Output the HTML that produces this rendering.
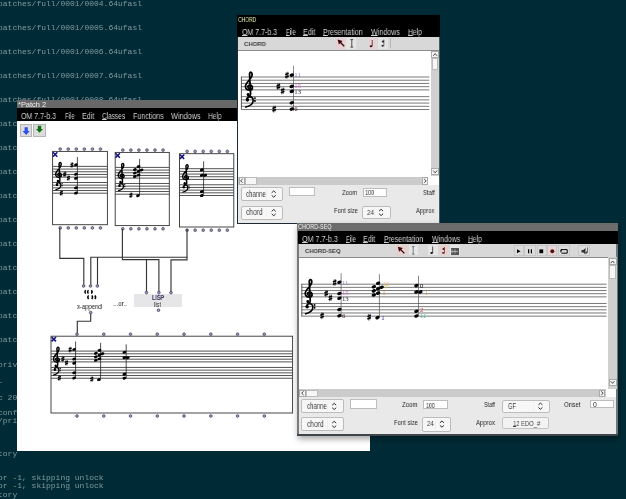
<!DOCTYPE html>
<html><head><meta charset="utf-8">
<style>
*{margin:0;padding:0;box-sizing:border-box}
html,body{width:626px;height:499px;overflow:hidden;background:#002b36;position:relative;font-family:"Liberation Sans",sans-serif}
.a{position:absolute}
.t{position:absolute;white-space:pre;line-height:1;will-change:transform}
u{text-decoration-thickness:0.7px;text-underline-offset:0.3px}
.term{position:absolute;left:0;font-family:"Liberation Mono",monospace;font-size:8px;line-height:8px;color:#7f9a9c;white-space:pre;transform:scaleY(1.0);transform-origin:0 50%;will-change:transform}
</style></head><body>

<div class="term" style="top:-0.20px;left:-2.1px">patches/full/0001/0004.64ufasl</div>
<div class="term" style="top:23.83px;left:-2.1px">patches/full/0001/0005.64ufasl</div>
<div class="term" style="top:47.87px;left:-2.1px">patches/full/0001/0006.64ufasl</div>
<div class="term" style="top:71.90px;left:-2.1px">patches/full/0001/0007.64ufasl</div>
<div class="term" style="top:95.94px;left:-2.1px">patches/full/0001/0008.64ufasl</div>
<div class="term" style="top:119.97px;left:-2.1px">patches/full/0001/0009.64ufasl</div>
<div class="term" style="top:144.01px;left:-2.1px">patches/full/0001/0009.64ufasl</div>
<div class="term" style="top:168.04px;left:-2.1px">patches/full/0001/0009.64ufasl</div>
<div class="term" style="top:192.07px;left:-2.1px">patches/full/0001/0009.64ufasl</div>
<div class="term" style="top:216.11px;left:-2.1px">patches/full/0001/0009.64ufasl</div>
<div class="term" style="top:240.14px;left:-2.1px">patches/full/0001/0009.64ufasl</div>
<div class="term" style="top:264.18px;left:-2.1px">patches/full/0001/0009.64ufasl</div>
<div class="term" style="top:288.21px;left:-2.1px">patches/full/0001/0009.64ufasl</div>
<div class="term" style="top:312.25px;left:-2.1px">patches/full/0001/0009.64ufasl</div>
<div class="term" style="top:336.28px;left:-2.1px">patches/full/0001/0009.64ufasl</div>
<div class="term" style="top:361.32px;left:-2.1px">private</div>
<div class="term" style="top:378.34px;left:-2.1px">-</div>
<div class="term" style="top:394.36px;left:-2.1px">c 2019</div>
<div class="term" style="top:409.38px;left:-2.1px">config</div>
<div class="term" style="top:417.40px;left:-2.1px">/private</div>
<div class="term" style="top:450.44px;left:-2.1px">tory</div>
<div class="term" style="top:474.48px;left:-2.1px">or -1, skipping unlock</div>
<div class="term" style="top:482.49px;left:-2.1px">or -1, skipping unlock</div>
<div class="term" style="top:490.50px;left:-2.1px">tory</div>
<div class="a" style="left:16.5px;top:100px;width:353.5px;height:351px;background:#ffffff;"></div>
<div class="a" style="left:17px;top:100px;width:353px;height:8px;background:#686868;"></div>
<div class="t" style="left:18.40px;top:102.00px;font-size:6.8px;color:#f0f0f0;font-weight:normal;font-family:'Liberation Sans',sans-serif;transform:scaleX(1.097);transform-origin:0 0;">*Patch 2</div>
<div class="a" style="left:17px;top:108px;width:353px;height:13px;background:#000;"></div>
<div class="t" style="left:20.90px;top:112.00px;font-size:8.8px;color:#cfcfcf;font-weight:normal;font-family:'Liberation Sans',sans-serif;transform:scaleX(0.800);transform-origin:0 0;">OM 7.7-b.3</div>
<div class="t" style="left:64.80px;top:112.00px;font-size:8.8px;color:#cfcfcf;font-weight:normal;font-family:'Liberation Sans',sans-serif;transform:scaleX(0.678);transform-origin:0 0;">File</div>
<div class="t" style="left:82.00px;top:112.00px;font-size:8.8px;color:#cfcfcf;font-weight:normal;font-family:'Liberation Sans',sans-serif;transform:scaleX(0.817);transform-origin:0 0;">Edit</div>
<div class="t" style="left:102.00px;top:112.00px;font-size:8.8px;color:#cfcfcf;font-weight:normal;font-family:'Liberation Sans',sans-serif;transform:scaleX(0.735);transform-origin:0 0;"><u>C</u>lasses</div>
<div class="t" style="left:132.70px;top:112.00px;font-size:8.8px;color:#cfcfcf;font-weight:normal;font-family:'Liberation Sans',sans-serif;transform:scaleX(0.805);transform-origin:0 0;">Functions</div>
<div class="t" style="left:171.00px;top:112.00px;font-size:8.8px;color:#cfcfcf;font-weight:normal;font-family:'Liberation Sans',sans-serif;transform:scaleX(0.830);transform-origin:0 0;">Windows</div>
<div class="t" style="left:208.00px;top:112.00px;font-size:8.8px;color:#cfcfcf;font-weight:normal;font-family:'Liberation Sans',sans-serif;transform:scaleX(0.747);transform-origin:0 0;">Help</div>
<div class="a" style="left:20px;top:124px;width:11.5px;height:12.5px;background:#dcdcdc;border:0.8px solid #b4b4b4;"></div>
<div class="a" style="left:33px;top:124px;width:13px;height:12.5px;background:#dcdcdc;border:0.8px solid #b4b4b4;"></div>
<div class="t" style="left:77.00px;top:303.00px;font-size:7.2px;color:#111;font-weight:normal;font-family:'Liberation Sans',sans-serif;transform:scaleX(0.819);transform-origin:0 0;">x-append</div>
<div class="t" style="left:113.00px;top:300.00px;font-size:7.6px;color:#222;font-weight:normal;font-family:'Liberation Sans',sans-serif;transform:scaleX(0.828);transform-origin:0 0;">...or..</div>
<div class="a" style="left:134px;top:294.3px;width:48.30000000000001px;height:12.899999999999977px;background:#e6e6e8;"></div>
<div class="t" style="left:152.30px;top:295.00px;font-size:6.4px;color:#2c2c58;font-weight:bold;font-family:'Liberation Sans',sans-serif;transform:scaleX(0.850);transform-origin:0 0;">LISP</div>
<div class="t" style="left:154.10px;top:302.00px;font-size:6.8px;color:#2a2a2a;font-weight:normal;font-family:'Liberation Sans',sans-serif;transform:scaleX(0.832);transform-origin:0 0;">list</div>
<svg class="a" style="left:0;top:0" width="626" height="499" viewBox="0 0 626 499"><path d="M24.6,127.3 H27.8 V131 H29.7 L26.2,135 L22.6,131 H24.6 Z" fill="#2d4ee8"/><path d="M37.8,125.8 H41.2 V129 H43 L39.5,132.8 L36,129 H37.8 Z" fill="#0e6e10"/><rect x="52.6" y="151.4" width="54.800000000000004" height="73.29999999999998" fill="#fff" stroke="#333" stroke-width="0.9"/><line x1="52.6" y1="166.40" x2="107.4" y2="166.40" stroke="#4a4a4a" stroke-width="0.95"/><line x1="52.6" y1="169.08" x2="107.4" y2="169.08" stroke="#4a4a4a" stroke-width="0.95"/><line x1="52.6" y1="171.76" x2="107.4" y2="171.76" stroke="#4a4a4a" stroke-width="0.95"/><line x1="52.6" y1="174.44" x2="107.4" y2="174.44" stroke="#4a4a4a" stroke-width="0.95"/><line x1="52.6" y1="177.12" x2="107.4" y2="177.12" stroke="#4a4a4a" stroke-width="0.95"/><line x1="52.6" y1="182.48" x2="107.4" y2="182.48" stroke="#4a4a4a" stroke-width="0.95"/><line x1="52.6" y1="185.16" x2="107.4" y2="185.16" stroke="#4a4a4a" stroke-width="0.95"/><line x1="52.6" y1="187.84" x2="107.4" y2="187.84" stroke="#4a4a4a" stroke-width="0.95"/><line x1="52.6" y1="190.52" x2="107.4" y2="190.52" stroke="#4a4a4a" stroke-width="0.95"/><line x1="52.6" y1="193.20" x2="107.4" y2="193.20" stroke="#4a4a4a" stroke-width="0.95"/><g transform="translate(54.800000000000004,166.4) scale(2.68)"><path d="M1.7,3.5 C1.0,3.6 0.8,2.7 1.6,2.5 C2.6,2.4 2.9,3.9 1.7,4.1 C0.4,4.2 0.0,3.0 0.6,2.1 C1.2,1.1 2.4,0.3 2.4,-0.8 C2.4,-1.6 1.8,-1.7 1.6,-1.0 L1.9,5.2 C2.0,5.9 1.3,6.0 1.0,5.6" fill="none" stroke="#000" stroke-width="0.55"/><circle cx="1.15" cy="5.45" r="0.45" fill="#000"/></g><g transform="translate(55.2,182.48000000000002) scale(2.1976)"><path d="M0.6,1.0 C0.6,-0.1 2.6,-0.2 2.6,1.3 C2.6,2.5 1.4,3.1 0.1,3.4" fill="none" stroke="#000" stroke-width="0.55"/><circle cx="0.8" cy="1.1" r="0.55" fill="#000"/><circle cx="3.15" cy="0.55" r="0.3" fill="#000"/><circle cx="3.15" cy="1.45" r="0.3" fill="#000"/></g><line x1="77.4" y1="157" x2="77.4" y2="193" stroke="#222" stroke-width="0.8"/><ellipse cx="75.95" cy="164.79" rx="1.93" ry="1.39" transform="rotate(-20 75.95 164.79)" fill="#000"/><ellipse cx="75.95" cy="174.23" rx="1.93" ry="1.39" transform="rotate(-20 75.95 174.23)" fill="#000"/><ellipse cx="75.95" cy="178.33" rx="1.93" ry="1.39" transform="rotate(-20 75.95 178.33)" fill="#000"/><ellipse cx="75.95" cy="187.84" rx="1.93" ry="1.39" transform="rotate(-20 75.95 187.84)" fill="#000"/><ellipse cx="75.95" cy="193.07" rx="1.93" ry="1.39" transform="rotate(-20 75.95 193.07)" fill="#000"/><g stroke="#000"><line x1="71.37" y1="162.25" x2="71.37" y2="167.87" stroke-width="0.43"/><line x1="72.55" y1="161.98" x2="72.55" y2="167.61" stroke-width="0.43"/><line x1="70.49" y1="164.52" x2="73.43" y2="163.32" stroke-width="1.34"/><line x1="70.49" y1="166.53" x2="73.43" y2="165.33" stroke-width="1.34"/></g><g stroke="#000"><line x1="64.21" y1="171.55" x2="64.21" y2="177.17" stroke-width="0.43"/><line x1="65.39" y1="171.28" x2="65.39" y2="176.91" stroke-width="0.43"/><line x1="63.33" y1="173.82" x2="66.28" y2="172.62" stroke-width="1.34"/><line x1="63.33" y1="175.83" x2="66.28" y2="174.63" stroke-width="1.34"/></g><g stroke="#000"><line x1="67.78" y1="175.24" x2="67.78" y2="180.87" stroke-width="0.43"/><line x1="68.96" y1="174.98" x2="68.96" y2="180.60" stroke-width="0.43"/><line x1="66.89" y1="177.52" x2="69.84" y2="176.32" stroke-width="1.34"/><line x1="66.89" y1="179.53" x2="69.84" y2="178.33" stroke-width="1.34"/></g><g stroke="#000"><line x1="60.73" y1="190.39" x2="60.73" y2="196.01" stroke-width="0.43"/><line x1="61.91" y1="190.12" x2="61.91" y2="195.75" stroke-width="0.43"/><line x1="59.85" y1="192.66" x2="62.79" y2="191.46" stroke-width="1.34"/><line x1="59.85" y1="194.67" x2="62.79" y2="193.47" stroke-width="1.34"/></g><g stroke="#14147a" stroke-width="1.6"><line x1="52.9" y1="152.3" x2="57.3" y2="156.70000000000002"/><line x1="57.3" y1="152.3" x2="52.9" y2="156.70000000000002"/></g><circle cx="60.2" cy="149.1" r="1.35" fill="#9a9ab8" stroke="#4a4a6a" stroke-width="0.8"/><circle cx="60.2" cy="227.89999999999998" r="1.35" fill="#9a9ab8" stroke="#4a4a6a" stroke-width="0.8"/><circle cx="68.25" cy="149.1" r="1.35" fill="#9a9ab8" stroke="#4a4a6a" stroke-width="0.8"/><circle cx="68.25" cy="227.89999999999998" r="1.35" fill="#9a9ab8" stroke="#4a4a6a" stroke-width="0.8"/><circle cx="76.30000000000001" cy="149.1" r="1.35" fill="#9a9ab8" stroke="#4a4a6a" stroke-width="0.8"/><circle cx="76.30000000000001" cy="227.89999999999998" r="1.35" fill="#9a9ab8" stroke="#4a4a6a" stroke-width="0.8"/><circle cx="84.35000000000001" cy="149.1" r="1.35" fill="#9a9ab8" stroke="#4a4a6a" stroke-width="0.8"/><circle cx="84.35000000000001" cy="227.89999999999998" r="1.35" fill="#9a9ab8" stroke="#4a4a6a" stroke-width="0.8"/><circle cx="92.4" cy="149.1" r="1.35" fill="#9a9ab8" stroke="#4a4a6a" stroke-width="0.8"/><circle cx="92.4" cy="227.89999999999998" r="1.35" fill="#9a9ab8" stroke="#4a4a6a" stroke-width="0.8"/><circle cx="100.45" cy="149.1" r="1.35" fill="#9a9ab8" stroke="#4a4a6a" stroke-width="0.8"/><circle cx="100.45" cy="227.89999999999998" r="1.35" fill="#9a9ab8" stroke="#4a4a6a" stroke-width="0.8"/><rect x="115.2" y="152.4" width="54.10000000000001" height="73.19999999999999" fill="#fff" stroke="#333" stroke-width="0.9"/><line x1="115.2" y1="167.40" x2="169.3" y2="167.40" stroke="#4a4a4a" stroke-width="0.95"/><line x1="115.2" y1="170.08" x2="169.3" y2="170.08" stroke="#4a4a4a" stroke-width="0.95"/><line x1="115.2" y1="172.76" x2="169.3" y2="172.76" stroke="#4a4a4a" stroke-width="0.95"/><line x1="115.2" y1="175.44" x2="169.3" y2="175.44" stroke="#4a4a4a" stroke-width="0.95"/><line x1="115.2" y1="178.12" x2="169.3" y2="178.12" stroke="#4a4a4a" stroke-width="0.95"/><line x1="115.2" y1="183.48" x2="169.3" y2="183.48" stroke="#4a4a4a" stroke-width="0.95"/><line x1="115.2" y1="186.16" x2="169.3" y2="186.16" stroke="#4a4a4a" stroke-width="0.95"/><line x1="115.2" y1="188.84" x2="169.3" y2="188.84" stroke="#4a4a4a" stroke-width="0.95"/><line x1="115.2" y1="191.52" x2="169.3" y2="191.52" stroke="#4a4a4a" stroke-width="0.95"/><line x1="115.2" y1="194.20" x2="169.3" y2="194.20" stroke="#4a4a4a" stroke-width="0.95"/><g transform="translate(117.4,167.4) scale(2.68)"><path d="M1.7,3.5 C1.0,3.6 0.8,2.7 1.6,2.5 C2.6,2.4 2.9,3.9 1.7,4.1 C0.4,4.2 0.0,3.0 0.6,2.1 C1.2,1.1 2.4,0.3 2.4,-0.8 C2.4,-1.6 1.8,-1.7 1.6,-1.0 L1.9,5.2 C2.0,5.9 1.3,6.0 1.0,5.6" fill="none" stroke="#000" stroke-width="0.55"/><circle cx="1.15" cy="5.45" r="0.45" fill="#000"/></g><g transform="translate(117.8,183.48000000000002) scale(2.1976)"><path d="M0.6,1.0 C0.6,-0.1 2.6,-0.2 2.6,1.3 C2.6,2.5 1.4,3.1 0.1,3.4" fill="none" stroke="#000" stroke-width="0.55"/><circle cx="0.8" cy="1.1" r="0.55" fill="#000"/><circle cx="3.15" cy="0.55" r="0.3" fill="#000"/><circle cx="3.15" cy="1.45" r="0.3" fill="#000"/></g><line x1="139.6" y1="159" x2="139.6" y2="195" stroke="#222" stroke-width="0.8"/><ellipse cx="138.50" cy="166.62" rx="1.93" ry="1.39" transform="rotate(-20 138.50 166.62)" fill="#000"/><ellipse cx="141.56" cy="169.95" rx="1.93" ry="1.39" transform="rotate(-20 141.56 169.95)" fill="#000"/><ellipse cx="138.50" cy="171.26" rx="1.93" ry="1.39" transform="rotate(-20 138.50 171.26)" fill="#000"/><ellipse cx="138.50" cy="174.98" rx="1.93" ry="1.39" transform="rotate(-20 138.50 174.98)" fill="#000"/><ellipse cx="137.99" cy="195.65" rx="1.93" ry="1.39" transform="rotate(-20 137.99 195.65)" fill="#000"/><ellipse cx="134.91" cy="169.54" rx="1.93" ry="1.39" transform="rotate(-20 134.91 169.54)" fill="#000"/><ellipse cx="134.91" cy="173.03" rx="1.93" ry="1.39" transform="rotate(-20 134.91 173.03)" fill="#000"/><ellipse cx="134.91" cy="176.51" rx="1.93" ry="1.39" transform="rotate(-20 134.91 176.51)" fill="#000"/><g stroke="#000"><line x1="130.33" y1="192.54" x2="130.33" y2="198.17" stroke-width="0.43"/><line x1="131.51" y1="192.27" x2="131.51" y2="197.90" stroke-width="0.43"/><line x1="129.44" y1="194.82" x2="132.39" y2="193.61" stroke-width="1.34"/><line x1="129.44" y1="196.83" x2="132.39" y2="195.62" stroke-width="1.34"/></g><g stroke="#14147a" stroke-width="1.6"><line x1="115.5" y1="153.3" x2="119.9" y2="157.70000000000002"/><line x1="119.9" y1="153.3" x2="115.5" y2="157.70000000000002"/></g><circle cx="122.8" cy="150.1" r="1.35" fill="#9a9ab8" stroke="#4a4a6a" stroke-width="0.8"/><circle cx="122.8" cy="228.79999999999998" r="1.35" fill="#9a9ab8" stroke="#4a4a6a" stroke-width="0.8"/><circle cx="130.85" cy="150.1" r="1.35" fill="#9a9ab8" stroke="#4a4a6a" stroke-width="0.8"/><circle cx="130.85" cy="228.79999999999998" r="1.35" fill="#9a9ab8" stroke="#4a4a6a" stroke-width="0.8"/><circle cx="138.9" cy="150.1" r="1.35" fill="#9a9ab8" stroke="#4a4a6a" stroke-width="0.8"/><circle cx="138.9" cy="228.79999999999998" r="1.35" fill="#9a9ab8" stroke="#4a4a6a" stroke-width="0.8"/><circle cx="146.95" cy="150.1" r="1.35" fill="#9a9ab8" stroke="#4a4a6a" stroke-width="0.8"/><circle cx="146.95" cy="228.79999999999998" r="1.35" fill="#9a9ab8" stroke="#4a4a6a" stroke-width="0.8"/><circle cx="155.0" cy="150.1" r="1.35" fill="#9a9ab8" stroke="#4a4a6a" stroke-width="0.8"/><circle cx="155.0" cy="228.79999999999998" r="1.35" fill="#9a9ab8" stroke="#4a4a6a" stroke-width="0.8"/><circle cx="163.05" cy="150.1" r="1.35" fill="#9a9ab8" stroke="#4a4a6a" stroke-width="0.8"/><circle cx="163.05" cy="228.79999999999998" r="1.35" fill="#9a9ab8" stroke="#4a4a6a" stroke-width="0.8"/><rect x="179.5" y="153.7" width="54.30000000000001" height="73.30000000000001" fill="#fff" stroke="#333" stroke-width="0.9"/><line x1="179.5" y1="168.70" x2="233.8" y2="168.70" stroke="#4a4a4a" stroke-width="0.95"/><line x1="179.5" y1="171.38" x2="233.8" y2="171.38" stroke="#4a4a4a" stroke-width="0.95"/><line x1="179.5" y1="174.06" x2="233.8" y2="174.06" stroke="#4a4a4a" stroke-width="0.95"/><line x1="179.5" y1="176.74" x2="233.8" y2="176.74" stroke="#4a4a4a" stroke-width="0.95"/><line x1="179.5" y1="179.42" x2="233.8" y2="179.42" stroke="#4a4a4a" stroke-width="0.95"/><line x1="179.5" y1="184.78" x2="233.8" y2="184.78" stroke="#4a4a4a" stroke-width="0.95"/><line x1="179.5" y1="187.46" x2="233.8" y2="187.46" stroke="#4a4a4a" stroke-width="0.95"/><line x1="179.5" y1="190.14" x2="233.8" y2="190.14" stroke="#4a4a4a" stroke-width="0.95"/><line x1="179.5" y1="192.82" x2="233.8" y2="192.82" stroke="#4a4a4a" stroke-width="0.95"/><line x1="179.5" y1="195.50" x2="233.8" y2="195.50" stroke="#4a4a4a" stroke-width="0.95"/><g transform="translate(181.7,168.7) scale(2.68)"><path d="M1.7,3.5 C1.0,3.6 0.8,2.7 1.6,2.5 C2.6,2.4 2.9,3.9 1.7,4.1 C0.4,4.2 0.0,3.0 0.6,2.1 C1.2,1.1 2.4,0.3 2.4,-0.8 C2.4,-1.6 1.8,-1.7 1.6,-1.0 L1.9,5.2 C2.0,5.9 1.3,6.0 1.0,5.6" fill="none" stroke="#000" stroke-width="0.55"/><circle cx="1.15" cy="5.45" r="0.45" fill="#000"/></g><g transform="translate(182.1,184.78) scale(2.1976)"><path d="M0.6,1.0 C0.6,-0.1 2.6,-0.2 2.6,1.3 C2.6,2.5 1.4,3.1 0.1,3.4" fill="none" stroke="#000" stroke-width="0.55"/><circle cx="0.8" cy="1.1" r="0.55" fill="#000"/><circle cx="3.15" cy="0.55" r="0.3" fill="#000"/><circle cx="3.15" cy="1.45" r="0.3" fill="#000"/></g><line x1="203.6" y1="161.3" x2="203.6" y2="194.7" stroke="#222" stroke-width="0.8"/><ellipse cx="201.80" cy="169.88" rx="1.93" ry="1.39" transform="rotate(-20 201.80 169.88)" fill="#000"/><ellipse cx="201.80" cy="175.24" rx="1.93" ry="1.39" transform="rotate(-20 201.80 175.24)" fill="#000"/><ellipse cx="205.21" cy="175.24" rx="1.93" ry="1.39" transform="rotate(-20 205.21 175.24)" fill="#000"/><ellipse cx="201.80" cy="191.59" rx="1.93" ry="1.39" transform="rotate(-20 201.80 191.59)" fill="#000"/><ellipse cx="201.80" cy="195.58" rx="1.93" ry="1.39" transform="rotate(-20 201.80 195.58)" fill="#000"/><g stroke="#14147a" stroke-width="1.6"><line x1="179.8" y1="154.6" x2="184.20000000000002" y2="159.0"/><line x1="184.20000000000002" y1="154.6" x2="179.8" y2="159.0"/></g><circle cx="187.1" cy="151.39999999999998" r="1.35" fill="#9a9ab8" stroke="#4a4a6a" stroke-width="0.8"/><circle cx="187.1" cy="230.2" r="1.35" fill="#9a9ab8" stroke="#4a4a6a" stroke-width="0.8"/><circle cx="195.15" cy="151.39999999999998" r="1.35" fill="#9a9ab8" stroke="#4a4a6a" stroke-width="0.8"/><circle cx="195.15" cy="230.2" r="1.35" fill="#9a9ab8" stroke="#4a4a6a" stroke-width="0.8"/><circle cx="203.2" cy="151.39999999999998" r="1.35" fill="#9a9ab8" stroke="#4a4a6a" stroke-width="0.8"/><circle cx="203.2" cy="230.2" r="1.35" fill="#9a9ab8" stroke="#4a4a6a" stroke-width="0.8"/><circle cx="211.25" cy="151.39999999999998" r="1.35" fill="#9a9ab8" stroke="#4a4a6a" stroke-width="0.8"/><circle cx="211.25" cy="230.2" r="1.35" fill="#9a9ab8" stroke="#4a4a6a" stroke-width="0.8"/><circle cx="219.3" cy="151.39999999999998" r="1.35" fill="#9a9ab8" stroke="#4a4a6a" stroke-width="0.8"/><circle cx="219.3" cy="230.2" r="1.35" fill="#9a9ab8" stroke="#4a4a6a" stroke-width="0.8"/><circle cx="227.35" cy="151.39999999999998" r="1.35" fill="#9a9ab8" stroke="#4a4a6a" stroke-width="0.8"/><circle cx="227.35" cy="230.2" r="1.35" fill="#9a9ab8" stroke="#4a4a6a" stroke-width="0.8"/><path d="M59.8,228 L59.8,258.3 L83.8,258.3 L83.8,285" fill="none" stroke="#353535" stroke-width="1.15"/><path d="M187,229 L187,257.2 L90.8,257.2 L90.8,285" fill="none" stroke="#353535" stroke-width="1.15"/><path d="M97.5,257.2 L97.5,285" fill="none" stroke="#353535" stroke-width="1.15"/><path d="M187,257.2 L187,259.8 L171,259.8 L171,292" fill="none" stroke="#353535" stroke-width="1.15"/><path d="M122.4,229 L122.4,259.6 L158.9,259.6 L158.9,292" fill="none" stroke="#353535" stroke-width="1.15"/><path d="M146.5,259.6 L146.5,292" fill="none" stroke="#353535" stroke-width="1.15"/><path d="M90.7,313 L90.7,321.2 L77.3,321.2 L77.3,334" fill="none" stroke="#353535" stroke-width="1.15"/><circle cx="83.6" cy="286" r="1.35" fill="#9a9ab8" stroke="#4a4a6a" stroke-width="0.8"/><circle cx="90.5" cy="286" r="1.35" fill="#9a9ab8" stroke="#4a4a6a" stroke-width="0.8"/><circle cx="97.4" cy="286" r="1.35" fill="#9a9ab8" stroke="#4a4a6a" stroke-width="0.8"/><circle cx="90.7" cy="312.6" r="1.35" fill="#9a9ab8" stroke="#4a4a6a" stroke-width="0.8"/><g fill="none" stroke="#000" stroke-width="1.5"><path d="M85.8,290.29999999999995 Q84.10000000000001,291.9 85.8,293.5"/><path d="M88.5,290.29999999999995 Q86.8,291.9 88.5,293.5"/><path d="M91.3,290.29999999999995 Q92.89999999999999,291.9 91.3,293.5"/><path d="M88.7,295.5 Q86.9,297.2 88.7,298.9"/><path d="M91.7,295.5 Q93.39999999999999,297.2 91.7,298.9"/><path d="M94.8,295.5 Q96.5,297.2 94.8,298.9"/></g><circle cx="146.5" cy="292.6" r="1.35" fill="#9a9ab8" stroke="#4a4a6a" stroke-width="0.8"/><circle cx="158.9" cy="292.6" r="1.35" fill="#9a9ab8" stroke="#4a4a6a" stroke-width="0.8"/><circle cx="171" cy="292.6" r="1.35" fill="#9a9ab8" stroke="#4a4a6a" stroke-width="0.8"/><circle cx="158.5" cy="310.2" r="1.35" fill="#9a9ab8" stroke="#4a4a6a" stroke-width="0.8"/><rect x="51" y="336.2" width="241.6" height="76.8" fill="#fff" stroke="#333" stroke-width="0.9"/><line x1="51" y1="351.10" x2="292.6" y2="351.10" stroke="#4a4a4a" stroke-width="0.95"/><line x1="51" y1="353.80" x2="292.6" y2="353.80" stroke="#4a4a4a" stroke-width="0.95"/><line x1="51" y1="356.50" x2="292.6" y2="356.50" stroke="#4a4a4a" stroke-width="0.95"/><line x1="51" y1="359.20" x2="292.6" y2="359.20" stroke="#4a4a4a" stroke-width="0.95"/><line x1="51" y1="361.90" x2="292.6" y2="361.90" stroke="#4a4a4a" stroke-width="0.95"/><line x1="51" y1="367.44" x2="292.6" y2="367.44" stroke="#4a4a4a" stroke-width="0.95"/><line x1="51" y1="370.14" x2="292.6" y2="370.14" stroke="#4a4a4a" stroke-width="0.95"/><line x1="51" y1="372.84" x2="292.6" y2="372.84" stroke="#4a4a4a" stroke-width="0.95"/><line x1="51" y1="375.54" x2="292.6" y2="375.54" stroke="#4a4a4a" stroke-width="0.95"/><line x1="51" y1="378.24" x2="292.6" y2="378.24" stroke="#4a4a4a" stroke-width="0.95"/><g transform="translate(52.6,351.1) scale(2.7)"><path d="M1.7,3.5 C1.0,3.6 0.8,2.7 1.6,2.5 C2.6,2.4 2.9,3.9 1.7,4.1 C0.4,4.2 0.0,3.0 0.6,2.1 C1.2,1.1 2.4,0.3 2.4,-0.8 C2.4,-1.6 1.8,-1.7 1.6,-1.0 L1.9,5.2 C2.0,5.9 1.3,6.0 1.0,5.6" fill="none" stroke="#000" stroke-width="0.55"/><circle cx="1.15" cy="5.45" r="0.45" fill="#000"/></g><g transform="translate(53.0,367.3) scale(2.295)"><path d="M0.6,1.0 C0.6,-0.1 2.6,-0.2 2.6,1.3 C2.6,2.5 1.4,3.1 0.1,3.4" fill="none" stroke="#000" stroke-width="0.55"/><circle cx="0.8" cy="1.1" r="0.55" fill="#000"/><circle cx="3.15" cy="0.55" r="0.3" fill="#000"/><circle cx="3.15" cy="1.45" r="0.3" fill="#000"/></g><line x1="75.6" y1="341.5" x2="75.6" y2="377.4" stroke="#222" stroke-width="0.8"/><ellipse cx="74.14" cy="349.48" rx="1.94" ry="1.40" transform="rotate(-20 74.14 349.48)" fill="#000"/><ellipse cx="74.14" cy="358.98" rx="1.94" ry="1.40" transform="rotate(-20 74.14 358.98)" fill="#000"/><ellipse cx="74.14" cy="363.12" rx="1.94" ry="1.40" transform="rotate(-20 74.14 363.12)" fill="#000"/><ellipse cx="74.14" cy="372.70" rx="1.94" ry="1.40" transform="rotate(-20 74.14 372.70)" fill="#000"/><ellipse cx="74.14" cy="377.97" rx="1.94" ry="1.40" transform="rotate(-20 74.14 377.97)" fill="#000"/><g stroke="#000"><line x1="69.53" y1="346.92" x2="69.53" y2="352.59" stroke-width="0.43"/><line x1="70.71" y1="346.64" x2="70.71" y2="352.31" stroke-width="0.43"/><line x1="68.63" y1="349.21" x2="71.60" y2="348.00" stroke-width="1.35"/><line x1="68.63" y1="351.24" x2="71.60" y2="350.02" stroke-width="1.35"/></g><g stroke="#000"><line x1="62.32" y1="356.28" x2="62.32" y2="361.95" stroke-width="0.43"/><line x1="63.50" y1="356.01" x2="63.50" y2="361.68" stroke-width="0.43"/><line x1="61.42" y1="358.58" x2="64.39" y2="357.36" stroke-width="1.35"/><line x1="61.42" y1="360.60" x2="64.39" y2="359.39" stroke-width="1.35"/></g><g stroke="#000"><line x1="65.91" y1="360.01" x2="65.91" y2="365.68" stroke-width="0.43"/><line x1="67.09" y1="359.74" x2="67.09" y2="365.41" stroke-width="0.43"/><line x1="65.02" y1="362.31" x2="67.99" y2="361.09" stroke-width="1.35"/><line x1="65.02" y1="364.33" x2="67.99" y2="363.12" stroke-width="1.35"/></g><g stroke="#000"><line x1="58.81" y1="375.27" x2="58.81" y2="380.94" stroke-width="0.43"/><line x1="59.99" y1="375.00" x2="59.99" y2="380.67" stroke-width="0.43"/><line x1="57.91" y1="377.56" x2="60.88" y2="376.35" stroke-width="1.35"/><line x1="57.91" y1="379.59" x2="60.88" y2="378.37" stroke-width="1.35"/></g><line x1="100.6" y1="342.9" x2="100.6" y2="378.1" stroke="#222" stroke-width="0.8"/><ellipse cx="99.49" cy="350.32" rx="1.94" ry="1.40" transform="rotate(-20 99.49 350.32)" fill="#000"/><ellipse cx="102.57" cy="353.67" rx="1.94" ry="1.40" transform="rotate(-20 102.57 353.67)" fill="#000"/><ellipse cx="99.49" cy="354.99" rx="1.94" ry="1.40" transform="rotate(-20 99.49 354.99)" fill="#000"/><ellipse cx="99.49" cy="358.74" rx="1.94" ry="1.40" transform="rotate(-20 99.49 358.74)" fill="#000"/><ellipse cx="98.98" cy="379.56" rx="1.94" ry="1.40" transform="rotate(-20 98.98 379.56)" fill="#000"/><ellipse cx="95.88" cy="353.26" rx="1.94" ry="1.40" transform="rotate(-20 95.88 353.26)" fill="#000"/><ellipse cx="95.88" cy="356.77" rx="1.94" ry="1.40" transform="rotate(-20 95.88 356.77)" fill="#000"/><ellipse cx="95.88" cy="360.28" rx="1.94" ry="1.40" transform="rotate(-20 95.88 360.28)" fill="#000"/><g stroke="#000"><line x1="91.26" y1="376.43" x2="91.26" y2="382.10" stroke-width="0.43"/><line x1="92.45" y1="376.16" x2="92.45" y2="381.83" stroke-width="0.43"/><line x1="90.37" y1="378.72" x2="93.34" y2="377.51" stroke-width="1.35"/><line x1="90.37" y1="380.75" x2="93.34" y2="379.53" stroke-width="1.35"/></g><line x1="126.2" y1="344.3" x2="126.2" y2="378.1" stroke="#222" stroke-width="0.8"/><ellipse cx="124.39" cy="352.29" rx="1.94" ry="1.40" transform="rotate(-20 124.39 352.29)" fill="#000"/><ellipse cx="124.39" cy="357.69" rx="1.94" ry="1.40" transform="rotate(-20 124.39 357.69)" fill="#000"/><ellipse cx="127.82" cy="357.69" rx="1.94" ry="1.40" transform="rotate(-20 127.82 357.69)" fill="#000"/><ellipse cx="124.39" cy="374.16" rx="1.94" ry="1.40" transform="rotate(-20 124.39 374.16)" fill="#000"/><ellipse cx="124.39" cy="378.18" rx="1.94" ry="1.40" transform="rotate(-20 124.39 378.18)" fill="#000"/><g stroke="#14147a" stroke-width="1.6"><line x1="51.6" y1="337" x2="56.0" y2="341.4"/><line x1="56.0" y1="337" x2="51.6" y2="341.4"/></g><circle cx="77.0" cy="334.2" r="1.35" fill="#9a9ab8" stroke="#4a4a6a" stroke-width="0.8"/><circle cx="77.0" cy="416" r="1.35" fill="#9a9ab8" stroke="#4a4a6a" stroke-width="0.8"/><circle cx="103.76" cy="334.2" r="1.35" fill="#9a9ab8" stroke="#4a4a6a" stroke-width="0.8"/><circle cx="103.76" cy="416" r="1.35" fill="#9a9ab8" stroke="#4a4a6a" stroke-width="0.8"/><circle cx="130.52" cy="334.2" r="1.35" fill="#9a9ab8" stroke="#4a4a6a" stroke-width="0.8"/><circle cx="130.52" cy="416" r="1.35" fill="#9a9ab8" stroke="#4a4a6a" stroke-width="0.8"/><circle cx="157.28" cy="334.2" r="1.35" fill="#9a9ab8" stroke="#4a4a6a" stroke-width="0.8"/><circle cx="157.28" cy="416" r="1.35" fill="#9a9ab8" stroke="#4a4a6a" stroke-width="0.8"/><circle cx="184.04000000000002" cy="334.2" r="1.35" fill="#9a9ab8" stroke="#4a4a6a" stroke-width="0.8"/><circle cx="184.04000000000002" cy="416" r="1.35" fill="#9a9ab8" stroke="#4a4a6a" stroke-width="0.8"/><circle cx="210.8" cy="334.2" r="1.35" fill="#9a9ab8" stroke="#4a4a6a" stroke-width="0.8"/><circle cx="210.8" cy="416" r="1.35" fill="#9a9ab8" stroke="#4a4a6a" stroke-width="0.8"/><circle cx="237.56" cy="334.2" r="1.35" fill="#9a9ab8" stroke="#4a4a6a" stroke-width="0.8"/><circle cx="237.56" cy="416" r="1.35" fill="#9a9ab8" stroke="#4a4a6a" stroke-width="0.8"/><circle cx="264.32000000000005" cy="334.2" r="1.35" fill="#9a9ab8" stroke="#4a4a6a" stroke-width="0.8"/><circle cx="264.32000000000005" cy="416" r="1.35" fill="#9a9ab8" stroke="#4a4a6a" stroke-width="0.8"/></svg>
<div class="a" style="left:237px;top:15px;width:203px;height:208.8px;background:#ffffff;"></div>
<div class="a" style="left:237px;top:15px;width:1.1999999999999886px;height:208.8px;background:#1e2a36;"></div>
<div class="a" style="left:237px;top:222.5px;width:203px;height:1.3000000000000114px;background:#1e2a36;"></div>
<div class="a" style="left:438.2px;top:37px;width:1.0px;height:185.5px;background:#e8eef4;"></div>
<div class="a" style="left:439.2px;top:15px;width:1.0px;height:208.8px;background:#4a5860;"></div>
<div class="a" style="left:237px;top:15px;width:203px;height:22.200000000000003px;background:#000;"></div>
<div class="t" style="left:237.90px;top:16.00px;font-size:7.2px;color:#dce4a8;font-weight:normal;font-family:'Liberation Sans',sans-serif;transform:scaleX(0.690);transform-origin:0 0;">CHORD</div>
<div class="t" style="left:242.00px;top:28.00px;font-size:8.8px;color:#cfcfcf;font-weight:normal;font-family:'Liberation Sans',sans-serif;transform:scaleX(0.800);transform-origin:0 0;"><u>O</u>M 7.7-b.3</div>
<div class="t" style="left:285.50px;top:28.00px;font-size:8.8px;color:#cfcfcf;font-weight:normal;font-family:'Liberation Sans',sans-serif;transform:scaleX(0.692);transform-origin:0 0;"><u>F</u>ile</div>
<div class="t" style="left:302.80px;top:28.00px;font-size:8.8px;color:#cfcfcf;font-weight:normal;font-family:'Liberation Sans',sans-serif;transform:scaleX(0.817);transform-origin:0 0;"><u>E</u>dit</div>
<div class="t" style="left:323.30px;top:28.00px;font-size:8.8px;color:#cfcfcf;font-weight:normal;font-family:'Liberation Sans',sans-serif;transform:scaleX(0.803);transform-origin:0 0;"><u>P</u>resentation</div>
<div class="t" style="left:370.90px;top:28.00px;font-size:8.8px;color:#cfcfcf;font-weight:normal;font-family:'Liberation Sans',sans-serif;transform:scaleX(0.810);transform-origin:0 0;"><u>W</u>indows</div>
<div class="t" style="left:407.70px;top:28.00px;font-size:8.8px;color:#cfcfcf;font-weight:normal;font-family:'Liberation Sans',sans-serif;transform:scaleX(0.758);transform-origin:0 0;"><u>H</u>elp</div>
<div class="a" style="left:238px;top:37.2px;width:201px;height:13.0px;background:#d8d8d8;"></div>
<div class="a" style="left:238px;top:49.8px;width:201px;height:1.0px;background:#8c8c8c;"></div>
<div class="t" style="left:243.80px;top:41.00px;font-size:6.2px;color:#3e3e3e;font-weight:bold;font-family:'Liberation Sans',sans-serif;transform:scaleX(0.968);transform-origin:0 0;">CHORD</div>
<div class="a" style="left:336.3px;top:38.2px;width:9.300000000000011px;height:10.399999999999999px;background:#e6d2d4;"></div>
<div class="a" style="left:346px;top:38.2px;width:9.800000000000011px;height:10.399999999999999px;background:#e4e6e6;"></div>
<div class="a" style="left:368.3px;top:38.2px;width:7.399999999999977px;height:10.399999999999999px;background:#e6d2d4;"></div>
<div class="a" style="left:378.4px;top:38.2px;width:9.300000000000011px;height:10.399999999999999px;background:#e4e4e4;"></div>
<div class="a" style="left:389.5px;top:38.2px;width:0.8000000000000114px;height:10.199999999999996px;background:#b8b8b8;"></div>
<div class="a" style="left:431px;top:50.8px;width:8.199999999999989px;height:125.7px;background:#d0d0d0;"></div>
<div class="a" style="left:431.2px;top:50.8px;width:8.0px;height:7.200000000000003px;background:#f2f2f2;border:0.5px solid #aaa;"></div>
<div class="a" style="left:431.8px;top:58px;width:6.599999999999966px;height:12px;background:#f6f6f6;border:0.5px solid #bbb;"></div>
<div class="a" style="left:431.2px;top:168px;width:8.0px;height:7px;background:#f2f2f2;border:0.5px solid #aaa;"></div>
<div class="a" style="left:238px;top:176.6px;width:190.3px;height:8.400000000000006px;background:#cbcbcb;"></div>
<div class="a" style="left:238.5px;top:177px;width:6.5px;height:7.599999999999994px;background:#f2f2f2;border:0.5px solid #aaa;"></div>
<div class="a" style="left:245px;top:177px;width:11.800000000000011px;height:7.599999999999994px;background:#f6f6f6;border:0.5px solid #bbb;"></div>
<div class="a" style="left:421.5px;top:177px;width:6.800000000000011px;height:7.599999999999994px;background:#f2f2f2;border:0.5px solid #aaa;"></div>
<div class="a" style="left:428.3px;top:176.6px;width:10.699999999999989px;height:8.400000000000006px;background:#ffffff;"></div>
<div class="a" style="left:238.2px;top:185px;width:200.0px;height:37.5px;background:#e9e9e9;"></div>
<div class="a" style="left:240.6px;top:187.4px;width:42.70000000000002px;height:13.299999999999983px;background:#f7f7f7;border:0.9px solid #bcbcbc;border-radius:2px;"></div>
<div class="t" style="left:246.00px;top:191.00px;font-size:8.2px;color:#3a3a3a;font-weight:normal;font-family:'Liberation Sans',sans-serif;transform:scaleX(0.740);transform-origin:0 0;">channe</div>
<div class="a" style="left:266.3px;top:189.4px;width:0.39999999999997726px;height:9.299999999999983px;background:#efefef;"></div>
<div class="a" style="left:240.6px;top:205.6px;width:42.70000000000002px;height:14.0px;background:#f7f7f7;border:0.9px solid #bcbcbc;border-radius:2px;"></div>
<div class="t" style="left:246.00px;top:209.00px;font-size:8.2px;color:#3a3a3a;font-weight:normal;font-family:'Liberation Sans',sans-serif;transform:scaleX(0.810);transform-origin:0 0;">chord</div>
<div class="a" style="left:266.3px;top:207.6px;width:0.39999999999997726px;height:10.0px;background:#efefef;"></div>
<div class="a" style="left:289.2px;top:187.4px;width:26.19999999999999px;height:9.099999999999994px;background:#ffffff;border:0.8px solid #bdbdbd;"></div>
<div class="t" style="left:342.00px;top:189.00px;font-size:7.3px;color:#2a2a2a;font-weight:normal;font-family:'Liberation Sans',sans-serif;transform:scaleX(0.815);transform-origin:0 0;">Zoom</div>
<div class="a" style="left:362.7px;top:187.6px;width:24.30000000000001px;height:9.200000000000017px;background:#ffffff;border:0.8px solid #bdbdbd;"></div>
<div class="t" style="left:364.90px;top:190.00px;font-size:6.8px;color:#1a1a1a;font-weight:normal;font-family:'Liberation Sans',sans-serif;transform:scaleX(0.810);transform-origin:0 0;">100</div>
<div class="t" style="left:422.80px;top:189.00px;font-size:7.3px;color:#2a2a2a;font-weight:normal;font-family:'Liberation Sans',sans-serif;transform:scaleX(0.806);transform-origin:0 0;">Staff</div>
<div class="t" style="left:333.70px;top:207.00px;font-size:7.3px;color:#2a2a2a;font-weight:normal;font-family:'Liberation Sans',sans-serif;transform:scaleX(0.807);transform-origin:0 0;">Font size</div>
<div class="a" style="left:361.6px;top:205.6px;width:29.099999999999966px;height:13.599999999999994px;background:#f7f7f7;border:0.9px solid #bcbcbc;border-radius:2px;"></div>
<div class="t" style="left:367.00px;top:209.00px;font-size:7.0px;color:#3a3a3a;font-weight:normal;font-family:'Liberation Sans',sans-serif;transform:scaleX(0.901);transform-origin:0 0;">24</div>
<div class="a" style="left:373.7px;top:207.6px;width:0.39999999999997726px;height:9.599999999999994px;background:#efefef;"></div>
<div class="t" style="left:415.50px;top:207.00px;font-size:7.3px;color:#2a2a2a;font-weight:normal;font-family:'Liberation Sans',sans-serif;transform:scaleX(0.795);transform-origin:0 0;">Approx</div>
<svg class="a" style="left:0;top:0" width="626" height="499" viewBox="0 0 626 499"><path d="M337.6,39.6 L342.6,40.9 L338.90000000000003,44.6 Z" fill="#3a0808"/><line x1="339.8" y1="41.800000000000004" x2="344.20000000000005" y2="46.2" stroke="#3a0808" stroke-width="1.3"/><g stroke="#4a3838" stroke-width="0.9"><line x1="351.8" y1="39.5" x2="351.8" y2="47.2"/><line x1="350.4" y1="39.6" x2="353.2" y2="39.6"/><line x1="350.4" y1="47.1" x2="353.2" y2="47.1"/></g><g fill="#2a1010"><ellipse cx="371" cy="46.2" rx="1.3" ry="1" /><rect x="371.8" y="40" width="0.7" height="6.2"/></g><g fill="#222"><ellipse cx="383" cy="41.5" rx="1.2" ry="0.9"/><ellipse cx="382.6" cy="45.8" rx="1.2" ry="0.9"/><rect x="383.6" y="39.6" width="0.6" height="6.5"/></g><path d="M433.3,55.8 L435.2,53.6 L437.1,55.8" fill="none" stroke="#222" stroke-width="0.8"/><path d="M433.3,170.6 L435.2,172.8 L437.1,170.6" fill="none" stroke="#222" stroke-width="0.8"/><path d="M242.6,179 L240.6,180.8 L242.6,182.6" fill="none" stroke="#222" stroke-width="0.8"/><path d="M424.2,179 L426.2,180.8 L424.2,182.6" fill="none" stroke="#222" stroke-width="0.8"/><path d="M271.7,192.75 L273.7,190.95000000000002 L275.7,192.75 M271.7,195.35000000000002 L273.7,197.15 L275.7,195.35000000000002" fill="none" stroke="#2a2a2a" stroke-width="1.0"/><path d="M271.7,211.29999999999998 L273.7,209.5 L275.7,211.29999999999998 M271.7,213.9 L273.7,215.7 L275.7,213.9" fill="none" stroke="#2a2a2a" stroke-width="1.0"/><path d="M379.09999999999997,211.09999999999997 L381.09999999999997,209.29999999999998 L383.09999999999997,211.09999999999997 M379.09999999999997,213.7 L381.09999999999997,215.49999999999997 L383.09999999999997,213.7" fill="none" stroke="#2a2a2a" stroke-width="1.0"/><line x1="241.2" y1="77.00" x2="429.3" y2="77.00" stroke="#6a6a6a" stroke-width="0.9"/><line x1="241.2" y1="80.22" x2="429.3" y2="80.22" stroke="#6a6a6a" stroke-width="0.9"/><line x1="241.2" y1="83.44" x2="429.3" y2="83.44" stroke="#6a6a6a" stroke-width="0.9"/><line x1="241.2" y1="86.66" x2="429.3" y2="86.66" stroke="#6a6a6a" stroke-width="0.9"/><line x1="241.2" y1="89.88" x2="429.3" y2="89.88" stroke="#6a6a6a" stroke-width="0.9"/><line x1="241.2" y1="96.64" x2="429.3" y2="96.64" stroke="#6a6a6a" stroke-width="0.9"/><line x1="241.2" y1="99.86" x2="429.3" y2="99.86" stroke="#6a6a6a" stroke-width="0.9"/><line x1="241.2" y1="103.08" x2="429.3" y2="103.08" stroke="#6a6a6a" stroke-width="0.9"/><line x1="241.2" y1="106.30" x2="429.3" y2="106.30" stroke="#6a6a6a" stroke-width="0.9"/><line x1="241.2" y1="109.52" x2="429.3" y2="109.52" stroke="#6a6a6a" stroke-width="0.9"/><line x1="241.4" y1="76.6" x2="241.4" y2="109.3" stroke="#333" stroke-width="0.8"/><g transform="translate(244.4,77) scale(3.22)"><path d="M1.7,3.5 C1.0,3.6 0.8,2.7 1.6,2.5 C2.6,2.4 2.9,3.9 1.7,4.1 C0.4,4.2 0.0,3.0 0.6,2.1 C1.2,1.1 2.4,0.3 2.4,-0.8 C2.4,-1.6 1.8,-1.7 1.6,-1.0 L1.9,5.2 C2.0,5.9 1.3,6.0 1.0,5.6" fill="none" stroke="#000" stroke-width="0.55"/><circle cx="1.15" cy="5.45" r="0.45" fill="#000"/></g><g transform="translate(244.8,96.32) scale(3.22)"><path d="M0.6,1.0 C0.6,-0.1 2.6,-0.2 2.6,1.3 C2.6,2.5 1.4,3.1 0.1,3.4" fill="none" stroke="#000" stroke-width="0.5"/><circle cx="0.8" cy="1.1" r="0.55" fill="#000"/><circle cx="3.15" cy="0.55" r="0.3" fill="#000"/><circle cx="3.15" cy="1.45" r="0.3" fill="#000"/></g><line x1="293.5" y1="65.8" x2="293.5" y2="111" stroke="#555" stroke-width="0.7"/><ellipse cx="291.76" cy="75.07" rx="2.32" ry="1.67" transform="rotate(-20 291.76 75.07)" fill="#000"/><ellipse cx="291.76" cy="86.40" rx="2.32" ry="1.67" transform="rotate(-20 291.76 86.40)" fill="#000"/><ellipse cx="291.76" cy="91.33" rx="2.32" ry="1.67" transform="rotate(-20 291.76 91.33)" fill="#000"/><ellipse cx="291.76" cy="102.76" rx="2.32" ry="1.67" transform="rotate(-20 291.76 102.76)" fill="#000"/><ellipse cx="291.76" cy="109.04" rx="2.32" ry="1.67" transform="rotate(-20 291.76 109.04)" fill="#000"/><g stroke="#000"><line x1="286.25" y1="72.01" x2="286.25" y2="78.77" stroke-width="0.52"/><line x1="287.67" y1="71.69" x2="287.67" y2="78.45" stroke-width="0.52"/><line x1="285.19" y1="74.75" x2="288.73" y2="73.30" stroke-width="1.61"/><line x1="285.19" y1="77.16" x2="288.73" y2="75.71" stroke-width="1.61"/></g><g stroke="#000"><line x1="277.66" y1="83.18" x2="277.66" y2="89.94" stroke-width="0.52"/><line x1="279.07" y1="82.86" x2="279.07" y2="89.62" stroke-width="0.52"/><line x1="276.59" y1="85.92" x2="280.14" y2="84.47" stroke-width="1.61"/><line x1="276.59" y1="88.33" x2="280.14" y2="86.89" stroke-width="1.61"/></g><g stroke="#000"><line x1="281.94" y1="87.63" x2="281.94" y2="94.39" stroke-width="0.52"/><line x1="283.36" y1="87.30" x2="283.36" y2="94.07" stroke-width="0.52"/><line x1="280.88" y1="90.36" x2="284.42" y2="88.91" stroke-width="1.61"/><line x1="280.88" y1="92.78" x2="284.42" y2="91.33" stroke-width="1.61"/></g><g stroke="#000"><line x1="273.47" y1="105.82" x2="273.47" y2="112.58" stroke-width="0.52"/><line x1="274.89" y1="105.50" x2="274.89" y2="112.26" stroke-width="0.52"/><line x1="272.41" y1="108.56" x2="275.95" y2="107.11" stroke-width="1.61"/><line x1="272.41" y1="110.97" x2="275.95" y2="109.52" stroke-width="1.61"/></g><text x="294.31" y="77.47" font-family="Liberation Serif" font-size="6.8" fill="#8080c0">11</text><text x="294.31" y="88.26" font-family="Liberation Serif" font-size="6.8" fill="#d860d8">15</text><text x="294.31" y="93.57" font-family="Liberation Serif" font-size="6.8" fill="#302038">13</text><text x="294.31" y="104.84" font-family="Liberation Serif" font-size="6.8" fill="#f0b090">‒</text><text x="294.31" y="111.44" font-family="Liberation Serif" font-size="6.8" fill="#401818">6</text></svg>
<div class="a" style="left:297px;top:223px;width:320.79999999999995px;height:212.60000000000002px;background:#ffffff;box-shadow:1px 3px 6px rgba(0,0,0,0.35);"></div>
<div class="a" style="left:297px;top:223px;width:2px;height:212.60000000000002px;background:#7a7a7a;"></div>
<div class="a" style="left:616.4px;top:223px;width:1.3999999999999773px;height:212.60000000000002px;background:#6a747a;"></div>
<div class="a" style="left:297px;top:434.2px;width:320.79999999999995px;height:1.400000000000034px;background:#3e464c;"></div>
<div class="a" style="left:297.5px;top:223px;width:320.29999999999995px;height:8px;background:#6c6c6c;"></div>
<div class="t" style="left:298.20px;top:223.00px;font-size:7.0px;color:#f2f2f2;font-weight:normal;font-family:'Liberation Sans',sans-serif;transform:scaleX(0.786);transform-origin:0 0;">CHORD-SEQ</div>
<div class="a" style="left:297.5px;top:231px;width:320.29999999999995px;height:13.199999999999989px;background:#000;"></div>
<div class="t" style="left:302.00px;top:235.00px;font-size:8.8px;color:#cfcfcf;font-weight:normal;font-family:'Liberation Sans',sans-serif;transform:scaleX(0.818);transform-origin:0 0;"><u>O</u>M 7.7-b.3</div>
<div class="t" style="left:345.50px;top:235.00px;font-size:8.8px;color:#cfcfcf;font-weight:normal;font-family:'Liberation Sans',sans-serif;transform:scaleX(0.699);transform-origin:0 0;"><u>F</u>ile</div>
<div class="t" style="left:363.30px;top:235.00px;font-size:8.8px;color:#cfcfcf;font-weight:normal;font-family:'Liberation Sans',sans-serif;transform:scaleX(0.810);transform-origin:0 0;"><u>E</u>dit</div>
<div class="t" style="left:383.90px;top:235.00px;font-size:8.8px;color:#cfcfcf;font-weight:normal;font-family:'Liberation Sans',sans-serif;transform:scaleX(0.793);transform-origin:0 0;"><u>P</u>resentation</div>
<div class="t" style="left:431.80px;top:235.00px;font-size:8.8px;color:#cfcfcf;font-weight:normal;font-family:'Liberation Sans',sans-serif;transform:scaleX(0.790);transform-origin:0 0;"><u>W</u>indows</div>
<div class="t" style="left:467.90px;top:235.00px;font-size:8.8px;color:#cfcfcf;font-weight:normal;font-family:'Liberation Sans',sans-serif;transform:scaleX(0.758);transform-origin:0 0;"><u>H</u>elp</div>
<div class="a" style="left:299px;top:244.2px;width:317.4px;height:12.800000000000011px;background:#d8d8d8;"></div>
<div class="a" style="left:299px;top:256.9px;width:317.4px;height:1.1000000000000227px;background:#8c8c8c;"></div>
<div class="t" style="left:304.90px;top:248.00px;font-size:6.2px;color:#3e3e3e;font-weight:bold;font-family:'Liberation Sans',sans-serif;transform:scaleX(0.942);transform-origin:0 0;">CHORD-SEQ</div>
<div class="a" style="left:395.8px;top:245.2px;width:11.5px;height:10.200000000000017px;background:#e8d0d0;"></div>
<div class="a" style="left:409px;top:245.2px;width:8.5px;height:10.200000000000017px;background:#e6e6e6;"></div>
<div class="a" style="left:428px;top:245.2px;width:9.5px;height:10.200000000000017px;background:#e6e6e6;"></div>
<div class="a" style="left:439.8px;top:245.2px;width:8.699999999999989px;height:10.200000000000017px;background:#e8d0d0;"></div>
<div class="a" style="left:449.5px;top:245.2px;width:10.5px;height:10.200000000000017px;background:#e6e6e6;"></div>
<div class="a" style="left:450.5px;top:248.2px;width:8.5px;height:6.600000000000023px;background:#555;"></div>
<div class="a" style="left:514px;top:245.4px;width:9.600000000000023px;height:10.199999999999989px;background:#dcdcdc;border:0.5px solid #c8c8c8;"></div>
<div class="a" style="left:524.4px;top:245.4px;width:11.399999999999977px;height:10.199999999999989px;background:#dcdcdc;border:0.5px solid #c8c8c8;"></div>
<div class="a" style="left:536.6px;top:245.4px;width:10.100000000000023px;height:10.199999999999989px;background:#dcdcdc;border:0.5px solid #c8c8c8;"></div>
<div class="a" style="left:547.4px;top:245.4px;width:9.600000000000023px;height:10.199999999999989px;background:#e8d6d6;border:0.5px solid #c8c8c8;"></div>
<div class="a" style="left:557.8px;top:245.4px;width:12.0px;height:10.199999999999989px;background:#dcdcdc;border:0.5px solid #c8c8c8;"></div>
<div class="a" style="left:578px;top:245.4px;width:12.200000000000045px;height:10.199999999999989px;background:#dcdcdc;border:0.5px solid #c8c8c8;"></div>
<div class="a" style="left:608.4px;top:257px;width:8.600000000000023px;height:132.2px;background:#d0d0d0;"></div>
<div class="a" style="left:608.6px;top:258px;width:8.199999999999932px;height:7.399999999999977px;background:#f2f2f2;border:0.5px solid #aaa;"></div>
<div class="a" style="left:609.2px;top:265.4px;width:7.0px;height:13.200000000000045px;background:#f6f6f6;border:0.5px solid #bbb;"></div>
<div class="a" style="left:608.6px;top:378.6px;width:8.199999999999932px;height:7.399999999999977px;background:#f2f2f2;border:0.5px solid #aaa;"></div>
<div class="a" style="left:299px;top:389.2px;width:306.5px;height:8.0px;background:#cbcbcb;"></div>
<div class="a" style="left:299.2px;top:389.6px;width:6.800000000000011px;height:7.199999999999989px;background:#f2f2f2;border:0.5px solid #aaa;"></div>
<div class="a" style="left:306px;top:389.6px;width:11.600000000000023px;height:7.199999999999989px;background:#f6f6f6;border:0.5px solid #bbb;"></div>
<div class="a" style="left:598.6px;top:389.6px;width:6.899999999999977px;height:7.199999999999989px;background:#f2f2f2;border:0.5px solid #aaa;"></div>
<div class="a" style="left:605.5px;top:389.2px;width:10.899999999999977px;height:8.0px;background:#ffffff;"></div>
<div class="a" style="left:299px;top:397.2px;width:317.4px;height:37.10000000000002px;background:#e9e9e9;"></div>
<div class="a" style="left:301.3px;top:399.4px;width:42.5px;height:14.100000000000023px;background:#f7f7f7;border:0.9px solid #bcbcbc;border-radius:2px;"></div>
<div class="t" style="left:306.80px;top:403.00px;font-size:8.2px;color:#3a3a3a;font-weight:normal;font-family:'Liberation Sans',sans-serif;transform:scaleX(0.740);transform-origin:0 0;">channe</div>
<div class="a" style="left:326.8px;top:401.4px;width:0.39999999999997726px;height:10.100000000000023px;background:#efefef;"></div>
<div class="a" style="left:301.3px;top:417.3px;width:42.5px;height:14.199999999999989px;background:#f7f7f7;border:0.9px solid #bcbcbc;border-radius:2px;"></div>
<div class="t" style="left:306.80px;top:421.00px;font-size:8.2px;color:#3a3a3a;font-weight:normal;font-family:'Liberation Sans',sans-serif;transform:scaleX(0.810);transform-origin:0 0;">chord</div>
<div class="a" style="left:326.8px;top:419.3px;width:0.39999999999997726px;height:10.199999999999989px;background:#efefef;"></div>
<div class="a" style="left:349.5px;top:399.4px;width:27.399999999999977px;height:9.600000000000023px;background:#ffffff;border:0.8px solid #bdbdbd;"></div>
<div class="t" style="left:402.30px;top:401.00px;font-size:7.3px;color:#2a2a2a;font-weight:normal;font-family:'Liberation Sans',sans-serif;transform:scaleX(0.831);transform-origin:0 0;">Zoom</div>
<div class="a" style="left:423px;top:400px;width:24.600000000000023px;height:8.699999999999989px;background:#ffffff;border:0.8px solid #bdbdbd;"></div>
<div class="t" style="left:426.00px;top:403.00px;font-size:6.8px;color:#1a1a1a;font-weight:normal;font-family:'Liberation Sans',sans-serif;transform:scaleX(0.775);transform-origin:0 0;">100</div>
<div class="t" style="left:484.00px;top:401.00px;font-size:7.3px;color:#2a2a2a;font-weight:normal;font-family:'Liberation Sans',sans-serif;transform:scaleX(0.745);transform-origin:0 0;">Staff</div>
<div class="t" style="left:393.90px;top:419.00px;font-size:7.3px;color:#2a2a2a;font-weight:normal;font-family:'Liberation Sans',sans-serif;transform:scaleX(0.807);transform-origin:0 0;">Font size</div>
<div class="a" style="left:422.2px;top:416.6px;width:29.30000000000001px;height:15.0px;background:#f7f7f7;border:0.9px solid #bcbcbc;border-radius:2px;"></div>
<div class="t" style="left:427.30px;top:420.00px;font-size:7.0px;color:#3a3a3a;font-weight:normal;font-family:'Liberation Sans',sans-serif;transform:scaleX(0.862);transform-origin:0 0;">24</div>
<div class="a" style="left:434.5px;top:418.6px;width:0.39999999999997726px;height:11.0px;background:#efefef;"></div>
<div class="t" style="left:476.00px;top:419.00px;font-size:7.3px;color:#2a2a2a;font-weight:normal;font-family:'Liberation Sans',sans-serif;transform:scaleX(0.821);transform-origin:0 0;">Approx</div>
<div class="a" style="left:502.3px;top:399.5px;width:47.69999999999999px;height:13.300000000000011px;background:#f7f7f7;border:0.9px solid #bcbcbc;border-radius:2px;"></div>
<div class="t" style="left:508.00px;top:403.00px;font-size:8.2px;color:#3a3a3a;font-weight:normal;font-family:'Liberation Sans',sans-serif;transform:scaleX(0.702);transform-origin:0 0;">GF</div>
<div class="a" style="left:533px;top:401.5px;width:0.39999999999997726px;height:9.300000000000011px;background:#efefef;"></div>
<div class="a" style="left:502.3px;top:417.2px;width:47.099999999999966px;height:12.0px;background:#f3f3f3;border:0.8px solid #c4c4c4;border-radius:2px;"></div>
<div class="t" style="left:512.80px;top:420.00px;font-size:7.6px;color:#444;font-weight:normal;font-family:'Liberation Sans',sans-serif;transform:scaleX(0.766);transform-origin:0 0;"><u>1</u>2 EDO_#</div>
<div class="t" style="left:564.00px;top:401.00px;font-size:7.3px;color:#2a2a2a;font-weight:normal;font-family:'Liberation Sans',sans-serif;transform:scaleX(0.841);transform-origin:0 0;">Onset</div>
<div class="a" style="left:590.3px;top:399.7px;width:24.0px;height:8.400000000000034px;background:#ffffff;border:0.8px solid #bdbdbd;"></div>
<div class="t" style="left:592.50px;top:402.00px;font-size:6.8px;color:#1a1a1a;font-weight:normal;font-family:'Liberation Sans',sans-serif;transform:scaleX(0.980);transform-origin:0 0;">0</div>
<svg class="a" style="left:0;top:0" width="626" height="499" viewBox="0 0 626 499"><path d="M397.8,246.8 L402.8,248.10000000000002 L399.1,251.8 Z" fill="#3a0808"/><line x1="400.0" y1="249.0" x2="404.40000000000003" y2="253.4" stroke="#3a0808" stroke-width="1.3"/><g stroke="#666" stroke-width="0.8"><line x1="413.2" y1="246.5" x2="413.2" y2="254.2"/><line x1="411.8" y1="246.6" x2="414.6" y2="246.6"/><line x1="411.8" y1="254.1" x2="414.6" y2="254.1"/></g><g fill="#111"><ellipse cx="431.6" cy="253" rx="1.3" ry="1" /><rect x="432.4" y="246.5" width="0.7" height="6.5"/></g><g fill="#501010"><ellipse cx="443.5" cy="249" rx="1.1" ry="0.9"/><ellipse cx="443.2" cy="252.8" rx="1.1" ry="0.9"/><rect x="444.1" y="247" width="0.6" height="6.5"/></g><g stroke="#ddd" stroke-width="0.6"><line x1="452" y1="249.5" x2="452" y2="253.5"/><line x1="455" y1="249.5" x2="455" y2="253.5"/><line x1="451.5" y1="251.5" x2="458" y2="251.5"/></g><path d="M517,249.3 L520.6,251.3 L517,253.3 Z" fill="#000"/><rect x="528" y="249.3" width="1.2" height="4" fill="#000"/><rect x="530.8" y="249.3" width="1.2" height="4" fill="#000"/><rect x="539.4" y="249.4" width="3.8" height="3.8" fill="#000"/><circle cx="552.3" cy="251.3" r="2" fill="#5a1010"/><path d="M561,252.5 V249.6 H567.2 V253.2 H561.6" fill="none" stroke="#000" stroke-width="1"/><path d="M560.2,250.8 L561.2,249.3 L562.2,250.8" fill="#000"/><g fill="#333"><path d="M581.5,250 L583.3,250 L585.5,248 L585.5,254.6 L583.3,252.6 L581.5,252.6 Z"/><rect x="587" y="247.4" width="0.6" height="5"/><circle cx="586.6" cy="252.5" r="0.9"/></g><path d="M610.7,263.2 L612.6,261 L614.5,263.2" fill="none" stroke="#222" stroke-width="0.8"/><path d="M610.7,381.2 L612.6,383.4 L614.5,381.2" fill="none" stroke="#222" stroke-width="0.8"/><path d="M303.6,391.4 L301.6,393.2 L303.6,395" fill="none" stroke="#222" stroke-width="0.8"/><path d="M601.2,391.4 L603.2,393.2 L601.2,395" fill="none" stroke="#222" stroke-width="0.8"/><path d="M332.2,405.15 L334.2,403.34999999999997 L336.2,405.15 M332.2,407.75 L334.2,409.55 L336.2,407.75" fill="none" stroke="#2a2a2a" stroke-width="1.0"/><path d="M332.2,423.09999999999997 L334.2,421.29999999999995 L336.2,423.09999999999997 M332.2,425.7 L334.2,427.5 L336.2,425.7" fill="none" stroke="#2a2a2a" stroke-width="1.0"/><path d="M439.9,422.8 L441.9,421.0 L443.9,422.8 M439.9,425.40000000000003 L441.9,427.20000000000005 L443.9,425.40000000000003" fill="none" stroke="#2a2a2a" stroke-width="1.0"/><path d="M538.4,404.84999999999997 L540.4,403.04999999999995 L542.4,404.84999999999997 M538.4,407.45 L540.4,409.25 L542.4,407.45" fill="none" stroke="#2a2a2a" stroke-width="1.0"/><line x1="301.6" y1="284.20" x2="606.6" y2="284.20" stroke="#6a6a6a" stroke-width="0.9"/><line x1="301.6" y1="287.37" x2="606.6" y2="287.37" stroke="#6a6a6a" stroke-width="0.9"/><line x1="301.6" y1="290.54" x2="606.6" y2="290.54" stroke="#6a6a6a" stroke-width="0.9"/><line x1="301.6" y1="293.71" x2="606.6" y2="293.71" stroke="#6a6a6a" stroke-width="0.9"/><line x1="301.6" y1="296.88" x2="606.6" y2="296.88" stroke="#6a6a6a" stroke-width="0.9"/><line x1="301.6" y1="303.47" x2="606.6" y2="303.47" stroke="#6a6a6a" stroke-width="0.9"/><line x1="301.6" y1="306.64" x2="606.6" y2="306.64" stroke="#6a6a6a" stroke-width="0.9"/><line x1="301.6" y1="309.81" x2="606.6" y2="309.81" stroke="#6a6a6a" stroke-width="0.9"/><line x1="301.6" y1="312.98" x2="606.6" y2="312.98" stroke="#6a6a6a" stroke-width="0.9"/><line x1="301.6" y1="316.15" x2="606.6" y2="316.15" stroke="#6a6a6a" stroke-width="0.9"/><line x1="301.8" y1="283.8" x2="301.8" y2="316.4" stroke="#333" stroke-width="0.8"/><g transform="translate(304.2,284.2) scale(3.17)"><path d="M1.7,3.5 C1.0,3.6 0.8,2.7 1.6,2.5 C2.6,2.4 2.9,3.9 1.7,4.1 C0.4,4.2 0.0,3.0 0.6,2.1 C1.2,1.1 2.4,0.3 2.4,-0.8 C2.4,-1.6 1.8,-1.7 1.6,-1.0 L1.9,5.2 C2.0,5.9 1.3,6.0 1.0,5.6" fill="none" stroke="#000" stroke-width="0.55"/><circle cx="1.15" cy="5.45" r="0.45" fill="#000"/></g><g transform="translate(304.6,303.21999999999997) scale(3.17)"><path d="M0.6,1.0 C0.6,-0.1 2.6,-0.2 2.6,1.3 C2.6,2.5 1.4,3.1 0.1,3.4" fill="none" stroke="#000" stroke-width="0.5"/><circle cx="0.8" cy="1.1" r="0.55" fill="#000"/><circle cx="3.15" cy="0.55" r="0.3" fill="#000"/><circle cx="3.15" cy="1.45" r="0.3" fill="#000"/></g><line x1="341.1" y1="273.2" x2="341.1" y2="316.7" stroke="#555" stroke-width="0.7"/><ellipse cx="339.39" cy="282.30" rx="2.28" ry="1.65" transform="rotate(-20 339.39 282.30)" fill="#000"/><ellipse cx="339.39" cy="293.46" rx="2.28" ry="1.65" transform="rotate(-20 339.39 293.46)" fill="#000"/><ellipse cx="339.39" cy="298.31" rx="2.28" ry="1.65" transform="rotate(-20 339.39 298.31)" fill="#000"/><ellipse cx="339.39" cy="309.56" rx="2.28" ry="1.65" transform="rotate(-20 339.39 309.56)" fill="#000"/><ellipse cx="339.39" cy="315.74" rx="2.28" ry="1.65" transform="rotate(-20 339.39 315.74)" fill="#000"/><g stroke="#000"><line x1="333.97" y1="279.29" x2="333.97" y2="285.94" stroke-width="0.51"/><line x1="335.36" y1="278.97" x2="335.36" y2="285.63" stroke-width="0.51"/><line x1="332.92" y1="281.98" x2="336.41" y2="280.55" stroke-width="1.58"/><line x1="332.92" y1="284.36" x2="336.41" y2="282.93" stroke-width="1.58"/></g><g stroke="#000"><line x1="325.50" y1="290.29" x2="325.50" y2="296.94" stroke-width="0.51"/><line x1="326.90" y1="289.97" x2="326.90" y2="296.63" stroke-width="0.51"/><line x1="324.46" y1="292.98" x2="327.94" y2="291.55" stroke-width="1.58"/><line x1="324.46" y1="295.36" x2="327.94" y2="293.93" stroke-width="1.58"/></g><g stroke="#000"><line x1="329.72" y1="294.66" x2="329.72" y2="301.32" stroke-width="0.51"/><line x1="331.11" y1="294.34" x2="331.11" y2="301.00" stroke-width="0.51"/><line x1="328.67" y1="297.36" x2="332.16" y2="295.93" stroke-width="1.58"/><line x1="328.67" y1="299.73" x2="332.16" y2="298.31" stroke-width="1.58"/></g><g stroke="#000"><line x1="321.38" y1="312.57" x2="321.38" y2="319.23" stroke-width="0.51"/><line x1="322.78" y1="312.25" x2="322.78" y2="318.91" stroke-width="0.51"/><line x1="320.34" y1="315.27" x2="323.82" y2="313.84" stroke-width="1.58"/><line x1="320.34" y1="317.64" x2="323.82" y2="316.22" stroke-width="1.58"/></g><text x="341.89" y="284.70" font-family="Liberation Serif" font-size="6.8" fill="#8080c0">11</text><text x="341.89" y="295.32" font-family="Liberation Serif" font-size="6.8" fill="#d860d8">15</text><text x="341.89" y="300.55" font-family="Liberation Serif" font-size="6.8" fill="#302038">13</text><text x="341.89" y="311.64" font-family="Liberation Serif" font-size="6.8" fill="#f0b090">‒</text><text x="341.89" y="318.14" font-family="Liberation Serif" font-size="6.8" fill="#401818">6</text><line x1="379.4" y1="274.2" x2="379.4" y2="317.4" stroke="#555" stroke-width="0.7"/><ellipse cx="378.10" cy="283.28" rx="2.28" ry="1.65" transform="rotate(-20 378.10 283.28)" fill="#000"/><ellipse cx="381.71" cy="287.21" rx="2.28" ry="1.65" transform="rotate(-20 381.71 287.21)" fill="#000"/><ellipse cx="378.10" cy="288.76" rx="2.28" ry="1.65" transform="rotate(-20 378.10 288.76)" fill="#000"/><ellipse cx="378.10" cy="293.17" rx="2.28" ry="1.65" transform="rotate(-20 378.10 293.17)" fill="#000"/><ellipse cx="377.50" cy="317.61" rx="2.28" ry="1.65" transform="rotate(-20 377.50 317.61)" fill="#000"/><ellipse cx="373.85" cy="286.74" rx="2.28" ry="1.65" transform="rotate(-20 373.85 286.74)" fill="#000"/><ellipse cx="373.85" cy="290.86" rx="2.28" ry="1.65" transform="rotate(-20 373.85 290.86)" fill="#000"/><ellipse cx="373.85" cy="294.98" rx="2.28" ry="1.65" transform="rotate(-20 373.85 294.98)" fill="#000"/><g stroke="#000"><line x1="368.43" y1="313.93" x2="368.43" y2="320.59" stroke-width="0.51"/><line x1="369.83" y1="313.62" x2="369.83" y2="320.27" stroke-width="0.51"/><line x1="367.39" y1="316.63" x2="370.87" y2="315.20" stroke-width="1.58"/><line x1="367.39" y1="319.01" x2="370.87" y2="317.58" stroke-width="1.58"/></g><text x="382.57" y="285.65" font-family="Liberation Serif" font-size="6.8" fill="#e8c090">15</text><text x="384.47" y="289.29" font-family="Liberation Serif" font-size="6.8" fill="#f0e030">7</text><text x="382.25" y="294.84" font-family="Liberation Serif" font-size="6.8" fill="#d09040">1</text><text x="381.14" y="319.88" font-family="Liberation Serif" font-size="6.8" fill="#1c1c9c">1</text><line x1="418.5" y1="275.7" x2="418.5" y2="315.8" stroke="#555" stroke-width="0.7"/><ellipse cx="416.38" cy="285.59" rx="2.28" ry="1.65" transform="rotate(-20 416.38 285.59)" fill="#000"/><ellipse cx="416.38" cy="291.93" rx="2.28" ry="1.65" transform="rotate(-20 416.38 291.93)" fill="#000"/><ellipse cx="420.40" cy="291.93" rx="2.28" ry="1.65" transform="rotate(-20 420.40 291.93)" fill="#000"/><ellipse cx="416.38" cy="311.27" rx="2.28" ry="1.65" transform="rotate(-20 416.38 311.27)" fill="#000"/><ellipse cx="416.38" cy="316.00" rx="2.28" ry="1.65" transform="rotate(-20 416.38 316.00)" fill="#000"/><text x="419.93" y="287.87" font-family="Liberation Serif" font-size="6.8" fill="#000">0</text><text x="424.68" y="294.52" font-family="Liberation Serif" font-size="6.8" fill="#e0a060">1</text><text x="419.93" y="311.64" font-family="Liberation Serif" font-size="6.8" fill="#c03838">2</text><text x="419.93" y="318.30" font-family="Liberation Serif" font-size="6.8" fill="#50b890">11</text></svg>
</body></html>
